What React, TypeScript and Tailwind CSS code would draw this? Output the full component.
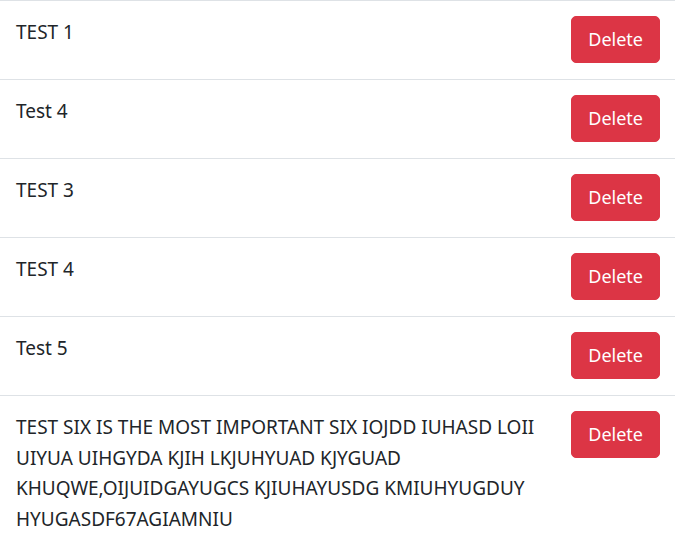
import React from 'react';

const items = [
  'TEST 1',
  'Test 4',
  'TEST 3',
  'TEST 4',
  'Test 5',
  'TEST SIX IS THE MOST IMPORTANT SIX IOJDD IUHASD LOII UIYUA UIHGYDA KJIH LKJUHYUAD KJYGUAD KHUQWE,OIJUIDGAYUGCS KJIUHAYUSDG KMIUHYUGDUY HYUGASDF67AGIAMNIU',
];

export default function App() {
  return (
    <div className="min-h-screen bg-white font-['Noto_Sans',sans-serif] text-[#212529]">
      <ul>
        {items.map((text, i) => (
          <li key={i} className="flex items-start justify-between border-t border-[#dee2e6] pt-[15px] pb-4 pl-4 pr-[15px]">
            <div className="flex-1 pt-px text-[19px] leading-[30.5px] break-words">{text}</div>
            <button className="shrink-0 rounded-[5px] border border-[#dc3545] bg-[#dc3545] px-4 py-2 text-[18px] leading-[29px] text-white">
              Delete
            </button>
          </li>
        ))}
      </ul>
    </div>
  );
}
